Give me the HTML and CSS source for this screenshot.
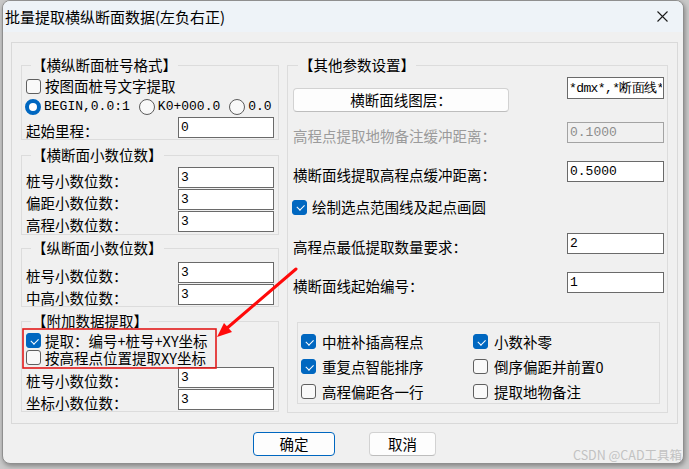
FILE: index.html
```html
<!doctype html>
<html>
	<head>
		<meta charset="utf-8">
		<title>批量提取横纵断面数据(左负右正)</title>
		<link rel="stylesheet" href="styles.css">
	</head>
	<body>
		<div class="window">
			<div class="titlebar">
				<span class="title">批量提取横纵断面数据(左负右正)</span>
				<svg class="close" width="11" height="11" viewBox="0 0 11 11"><path d="M0.5 0.5 L10.5 10.5 M10.5 0.5 L0.5 10.5" stroke="#1b1b1b" stroke-width="1.1" fill="none"/></svg>
			</div>
			<div class="frame">
				<div class="col-left">
					<div class="group g1">
						<div class="group-title">【横纵断面桩号格式】</div>
						<div class="chkrow"><span class="cb"></span>按图面桩号文字提取</div>
						<div class="radiorow">
							<span class="rb on"></span><span class="rtext">BEGIN,0.0:1</span>
							<span class="rb"></span><span class="rtext">K0+000.0</span>
							<span class="rb"></span><span class="rtext">0.0</span>
						</div>
						<div class="field"><span class="lbl">起始里程：</span><input type="text" value="0"></div>
					</div>
					<div class="group g2">
						<div class="group-title">【横断面小数位数】</div>
						<div class="field"><span class="lbl">桩号小数位数：</span><input type="text" value="3"></div>
						<div class="field"><span class="lbl">偏距小数位数：</span><input type="text" value="3"></div>
						<div class="field"><span class="lbl">高程小数位数：</span><input type="text" value="3"></div>
					</div>
					<div class="group g3">
						<div class="group-title">【纵断面小数位数】</div>
						<div class="field"><span class="lbl">桩号小数位数：</span><input type="text" value="3"></div>
						<div class="field"><span class="lbl">中高小数位数：</span><input type="text" value="3"></div>
					</div>
					<div class="group g4">
						<div class="group-title">【附加数据提取】</div>
						<div class="chkrow small"><span class="cb on"></span>提取：编号+桩号+XY坐标</div>
						<div class="chkrow small"><span class="cb"></span>按高程点位置提取XY坐标</div>
						<div class="field first"><span class="lbl">桩号小数位数：</span><input type="text" value="3"></div>
						<div class="field"><span class="lbl">坐标小数位数：</span><input type="text" value="3"></div>
					</div>
				</div>
				<div class="group right">
					<div class="group-title">【其他参数设置】</div>
					<div class="layer-row">
						<button class="btn layer">横断面线图层：</button>
						<input class="layers" type="text" value="*dmx*,*断面线*">
					</div>
					<div class="field r-b disabled"><span class="lbl">高程点提取地物备注缓冲距离：</span><input type="text" value="0.1000" disabled></div>
					<div class="field r-c"><span class="lbl">横断面线提取高程点缓冲距离：</span><input type="text" value="0.5000"></div>
					<div class="chkrow r-d"><span class="cb on"></span>绘制选点范围线及起点画圆</div>
					<div class="field r-e"><span class="lbl">高程点最低提取数量要求：</span><input type="text" value="2"></div>
					<div class="field r-f"><span class="lbl">横断面线起始编号：</span><input type="text" value="1"></div>
					<div class="opts">
						<div class="opt"><span class="cb on"></span>中桩补插高程点</div>
						<div class="opt"><span class="cb on"></span>小数补零</div>
						<div class="opt"><span class="cb on"></span>重复点智能排序</div>
						<div class="opt"><span class="cb"></span>倒序偏距并前置0</div>
						<div class="opt"><span class="cb"></span>高程偏距各一行</div>
						<div class="opt"><span class="cb"></span>提取地物备注</div>
					</div>
				</div>
			</div>
			<div class="buttons">
				<button class="btn ok">确定</button>
				<button class="btn cancel">取消</button>
			</div>
		</div>
		<svg class="marks" width="689" height="469" viewBox="0 0 689 469">
			<rect x="23" y="329" width="193" height="39" fill="none" stroke="#e31b1b" stroke-width="1.6"/>
			<line x1="296" y1="269" x2="226" y2="329" stroke="#ff0a0a" stroke-width="3" stroke-linecap="round"/>
			<polygon points="217,337 224,323 232,332" fill="#ff0a0a"/>
		</svg>
		<div class="watermark">CSDN @CAD工具箱</div>
	</body>
</html>
```
FILE: styles.css
```css
* {
	box-sizing : border-box;
}
body {
	margin : 0;
	width : 689px;
	height : 469px;
	overflow : hidden;
	position : relative;
	background : #c9c9c9;
	font-family : "Noto Sans CJK SC", sans-serif;
	font-size : 14.5px;
	line-height : 16px;
	color : #000;
}
.window {
	margin-left : 2px;
	width : 682px;
	height : 464px;
	background : #f0f0f0;
	border : 1px solid #8f8f8f;
	border-radius : 8px;
	overflow : hidden;
	box-shadow : 1px 2px 5px rgba(0,0,0,0.35);
}
.titlebar {
	height : 31px;
	background : #eef3f8;
	display : flex;
	align-items : center;
	justify-content : space-between;
	padding : 0 15px 0 2px;
}
.title {
	font-size : 15px;
}
.frame {
	margin : 10px 0 0 8px;
	width : 667px;
	height : 382px;
	border : 1px solid #d9d9d9;
	display : flex;
	align-items : flex-start;
	gap : 8px;
	padding : 22px 9px 0 9px;
}
.col-left {
	width : 258px;
	display : flex;
	flex-direction : column;
}
.group {
	border : 1px solid #dcdcdc;
	padding : 0 4px;
}
.group-title {
	width : fit-content;
	height : 16px;
	margin : -9px 0 0 5px;
	padding : 0 1px;
	background : #f0f0f0;
	white-space : nowrap;
}
.g1 .group-title {
	margin-bottom : 2px;
}
.g2 {
	margin-top : 15px;
	padding-bottom : 1px;
}
.g2 .group-title {
	margin-bottom : 4px;
}
.g3 {
	margin-top : 13px;
}
.g3 .group-title {
	margin-bottom : 6px;
}
.g4 {
	margin-top : 14px;
}
.g4 .group-title {
	margin-bottom : 3px;
}
.chkrow {
	height : 22px;
	display : flex;
	align-items : center;
}
.chkrow.small {
	height : 17px;
}
.field.first {
	margin-top : 1px;
}
.radiorow {
	height : 20px;
	display : flex;
	align-items : center;
	font-family : "Liberation Mono", monospace;
	font-size : 13px;
	margin-left : -1px;
}
.rtext {
	margin-right : 9px;
}
.field {
	height : 22px;
	display : flex;
	align-items : flex-start;
}
.field .lbl {
	flex-grow : 1;
	padding-top : 6px;
	white-space : nowrap;
}
input[type='text'] {
	width : 96px;
	height : 21px;
	margin : 0;
	border : 1px solid #6a6a6a;
	border-radius : 0;
	background : #fff;
	padding : 0 2px;
	font-family : "Liberation Mono", monospace;
	font-size : 13px;
	color : #000;
	outline : none;
}
.disabled .lbl {
	color : #9b9b9b;
}
input[disabled] {
	background : #f0f0f0;
	border-color : #a3a3a3;
	color : #8d8d8d;
}
.cb {
	width : 15px;
	height : 15px;
	border : 1px solid #5f5f5f;
	border-radius : 3px;
	background : #f9f9f9;
	margin-right : 4px;
	flex-shrink : 0;
	position : relative;
}
.cb.on {
	background : #0067c0;
	border-color : #0067c0;
}
.cb.on::after {
	content : "";
	position : absolute;
	left : 3.5px;
	top : 3.5px;
	width : 6px;
	height : 3.5px;
	border-left : 1.2px solid #fff;
	border-bottom : 1.2px solid #fff;
	transform : rotate(-45deg);
}
.rb {
	width : 16px;
	height : 16px;
	border : 1px solid #5c5c5c;
	border-radius : 50%;
	background : #f8f8f8;
	margin-right : 3px;
	flex-shrink : 0;
}
.rb.on {
	border : 4.5px solid #0067c0;
	background : #fff;
}
.right {
	width : 381px;
	height : 348px;
	padding : 0 3px 0 5px;
}
.layer-row {
	margin-top : 4px;
	display : flex;
	align-items : flex-start;
	justify-content : space-between;
}
.btn {
	font-family : "Noto Sans CJK SC", sans-serif;
	font-size : 14.5px;
	line-height : 16px;
	color : #000;
	background : #fdfdfd;
	border : 1px solid #d2d2d2;
	border-bottom-color : #bdbdbd;
	border-radius : 4px;
	padding : 0;
}
.btn.layer {
	width : 216px;
	height : 24px;
	margin-top : 11px;
}
input.layers {
	width : 97px;
	height : 22px;
	padding : 0 1px;
	font-size : 13px;
	letter-spacing : -0.6px;
}
.right .field input {
	width : 97px;
}
.r-b {
	margin-top : 10px;
}
.r-c {
	margin-top : 17px;
}
.r-d {
	margin-top : 13px;
}
.r-d .cb {
	margin-right : 5px;
	margin-left : -1px;
}
.r-e {
	margin-top : 15px;
}
.r-f {
	margin-top : 17px;
}
.opts {
	margin : 28px 4px 0;
	height : 82px;
	border : 1px solid #dcdcdc;
	display : grid;
	grid-template-columns : 172px 1fr;
	grid-auto-rows : 25px;
	padding : 6px 0 0 3px;
}
.opt {
	display : flex;
	align-items : center;
}
.opt .cb {
	margin-right : 6px;
}
.buttons {
	margin-top : 8px;
	padding-left : 250px;
	display : flex;
	gap : 34px;
}
.btn.ok {
	width : 82px;
	height : 24px;
	border : 1px solid #0067c0;
}
.btn.cancel {
	width : 67px;
	height : 24px;
}
.marks {
	position : absolute;
	left : 0;
	top : 0;
	pointer-events : none;
}
.watermark {
	position : absolute;
	left : 573px;
	top : 447px;
	font-size : 12.5px;
	color : #c2c2c2;
	white-space : nowrap;
}
```
